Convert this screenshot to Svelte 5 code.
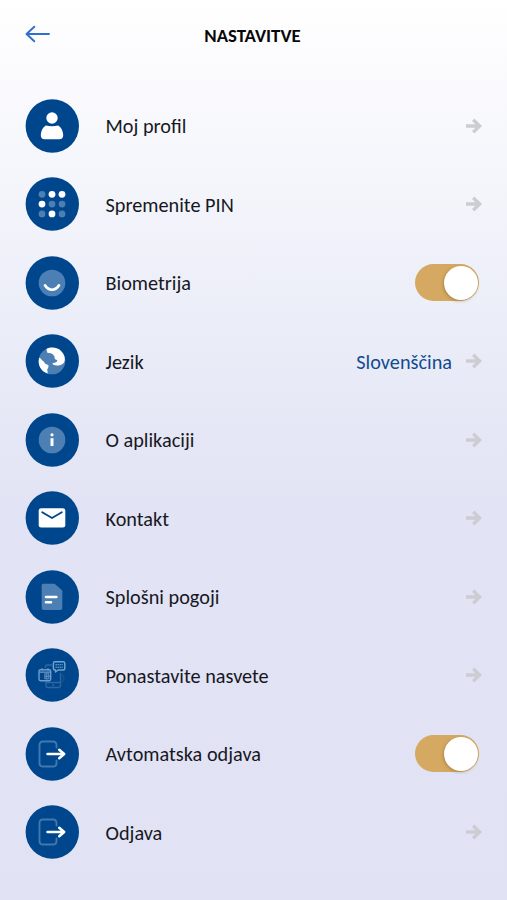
<script>
  const items = [
    { icon: 'profile', label: 'Moj profil' },
    { icon: 'pin', label: 'Spremenite PIN' },
    { icon: 'face', label: 'Biometrija', toggle: true },
    { icon: 'globe', label: 'Jezik', value: 'Slovenščina' },
    { icon: 'info', label: 'O aplikaciji' },
    { icon: 'mail', label: 'Kontakt' },
    { icon: 'document', label: 'Splošni pogoji' },
    { icon: 'tips', label: 'Ponastavite nasvete' },
    { icon: 'exit', label: 'Avtomatska odjava', toggle: true },
    { icon: 'exit', label: 'Odjava' }
  ];
  const dots = [0, 1, 1, 1, 0, 0, 0, 1, 0];
</script>

<main>
  <header>
    <button class="back" aria-label="Nazaj">
      <svg width="26" height="18" viewBox="0 0 26 18" fill="none" stroke="#2f70c8" stroke-width="1.9" stroke-linecap="round" stroke-linejoin="round">
        <path d="M24 9H1.5M9.3 1.7L1.5 9l7.8 7.3" />
      </svg>
    </button>
    <h1>NASTAVITVE</h1>
  </header>

  <ul>
    {#each items as item}
      <li>
        <svg class="badge" width="54" height="54" viewBox="0 0 54 54">
          <circle cx="27.3" cy="27" r="26.7" fill="#00468d" />
          {#if item.icon === 'profile'}
            <circle cx="27" cy="19" r="5.7" fill="#fff" />
            <path d="M20.8 26.5Q27 27.8 33.2 26.5C36.5 28.7 38 32 38.2 36Q38.3 40.2 34.2 40.2H19.8Q15.7 40.2 15.8 36C16 32 17.5 28.7 20.8 26.5Z" fill="#fff" />
          {:else if item.icon === 'pin'}
            {#each dots as lit, i}
              <circle cx={17 + (i % 3) * 10} cy={17.3 + Math.floor(i / 3) * 9.8} r="3.4" fill={lit ? '#fff' : '#4c80b5'} />
            {/each}
          {:else if item.icon === 'face'}
            <circle cx="27" cy="27" r="13.3" fill="#4c80b5" />
            <path d="M20 29.3C23.5 35.2 30.5 35.2 34 29.3" fill="none" stroke="#fff" stroke-width="2.7" stroke-linecap="round" />
          {:else if item.icon === 'globe'}
            <circle cx="27" cy="27" r="13.3" fill="#4c80b5" />
            <path d="M21.4 15C26 12.6 32.7 13.3 36.5 17.4C40.1 21.2 40.9 26.5 38.5 29.2C36 31.6 31.5 32.3 28.3 30.8L27.3 29.3L31.4 28.2L32.4 26.2L29.8 25L29.6 22.8L27.8 20.3L25.8 19.3L22.3 18.8Z M14.2 23.7C16.5 24.3 17 27 18.8 27.6L20 29.5L23.5 31.2L23.3 33.5L22.2 35.5L22.8 39.5C15.9 37.4 12.2 30.5 14.2 23.7Z" fill="#fff" />
          {:else if item.icon === 'info'}
            <circle cx="27" cy="27" r="13.3" fill="#4c80b5" />
            <circle cx="27" cy="21.8" r="1.6" fill="#fff" />
            <path d="M27 25.2V33" stroke="#fff" stroke-width="3" />
          {:else if item.icon === 'mail'}
            <rect x="13.7" y="17.2" width="26.6" height="19.4" rx="2.4" fill="#fff" />
            <path d="M17.2 21.2L27 27L36.8 21.2" fill="none" stroke="#00468d" stroke-width="1.9" stroke-linecap="round" />
          {:else if item.icon === 'document'}
            <path d="M18.2 13.7H29.6L37.3 20.5V38.1Q37.3 40.1 35.3 40.1H18.7Q16.7 40.1 16.7 38.1V15.2Q16.7 13.7 18.2 13.7Z" fill="#4c80b5" />
            <path d="M21 27H31.3M21 32.2H26" stroke="#fff" stroke-width="2.6" stroke-linecap="round" />
          {:else if item.icon === 'tips'}
            <g fill="none" stroke-linejoin="round">
              <path d="M20.5 20V18.8Q20.5 17 22.5 17H27M21 34V37.5Q21 39.5 23 39.5H33Q35.5 39.5 35.5 37.5V25M21 34.5H35M27.2 37H29.2" stroke="#2c69a3" stroke-width="1.3" />
              <path d="M36.5 26L38.5 28.5V32L36.5 34.5" stroke="#174f88" stroke-width="2" />
              <rect x="14" y="21.7" width="11.7" height="11" rx="1.6" stroke="#6e9dca" stroke-width="1.4" />
              <path d="M14.3 24.2H25.3M17 20.3V22.5M23 20.3V22.5" stroke="#6e9dca" stroke-width="1.3" />
              <path d="M19.8 25.8H23.8V30.7H19.8ZM21.7 26V31.8M20 28.4H25.5" stroke="#5c8dbd" stroke-width="1.1" />
              <path d="M30 13.8H38Q39.8 13.8 39.8 15.5V20.2Q39.8 22 38 22H33L30.5 24V22Q28.4 22 28.4 20.2V15.5Q28.4 13.8 30 13.8Z" stroke="#75a4d0" stroke-width="1.4" />
              <path d="M30.5 16.8H37.8M30.5 19.2H37.8" stroke="#75a4d0" stroke-width="1.1" stroke-dasharray="1.5 .5" />
            </g>
          {:else}
            <path d="M31.5 20.5V18Q31.5 14.5 28 14.5H18Q14.5 14.5 14.5 18V36Q14.5 39.5 18 39.5H28Q31.5 39.5 31.5 36V33.5" fill="none" stroke="#4079af" stroke-width="1.9" stroke-linecap="round" />
            <path d="M22.5 27H38.8M34.2 22.7L39.2 27L34.2 31.3" fill="none" stroke="#fff" stroke-width="2.5" stroke-linecap="round" stroke-linejoin="round" />
          {/if}
        </svg>
        <span class="label">{item.label}</span>
        {#if item.toggle}
          <button class="toggle" role="switch" aria-checked="true" aria-label={item.label}><i></i></button>
        {:else}
          {#if item.value}<span class="value">{item.value}</span>{/if}
          <svg class="arrow" width="18" height="16" viewBox="0 0 18 16" fill="none" stroke="#cccdd3" stroke-width="3.4">
            <path d="M1 8H14M8.2 1.8L14.6 8L8.2 14.2" />
          </svg>
        {/if}
      </li>
    {/each}
  </ul>
</main>

<style>
  main {
    box-sizing: border-box;
    height: 900px;
    overflow: hidden;
    font-family: Carlito, Calibri, Lato, "Noto Sans", sans-serif;
    color: #17181f;
    background: linear-gradient(#fff 0, #fcfcfe 50px, #f4f5fb 190px, #ebedf8 320px, #e2e3f4 510px, #e1e3f4 100%);
  }
  header {
    display: grid;
    grid-template-columns: 80px 1fr 82px;
    align-items: center;
    height: 70px;
    margin-bottom: 16.4px;
  }
  button {
    border: 0;
    padding: 0;
    background: none;
  }
  .back {
    display: flex;
    margin: 0 0 2px 25px;
  }
  h1 {
    margin: 2px 0 0;
    text-align: center;
    font-size: 18.8px;
    line-height: 24px;
    font-weight: 700;
    color: #08080a;
  }
  ul {
    margin: 0;
    padding: 0;
    list-style: none;
  }
  li {
    display: flex;
    align-items: center;
    height: 78.52px;
    padding: 0 24px 0 25px;
  }
  .badge {
    flex: none;
  }
  .label {
    flex: 1;
    padding: 1.4px 0 0 26.5px;
    font-size: 20.25px;
    line-height: 24px;
    white-space: nowrap;
  }
  .value {
    padding-top: 1.4px;
    margin-right: 13px;
    font-size: 20.25px;
    line-height: 24px;
    color: #124b91;
  }
  .toggle {
    display: flex;
    align-items: center;
    justify-content: flex-end;
    box-sizing: border-box;
    width: 64.5px;
    height: 37px;
    margin-right: 4px;
    padding-right: 1.5px;
    border-radius: 19px;
    background: #d5a961;
  }
  .toggle i {
    width: 34px;
    height: 34px;
    border-radius: 50%;
    background: #fff;
    box-shadow: -1px 1px 3px #8a642b80;
  }
</style>
